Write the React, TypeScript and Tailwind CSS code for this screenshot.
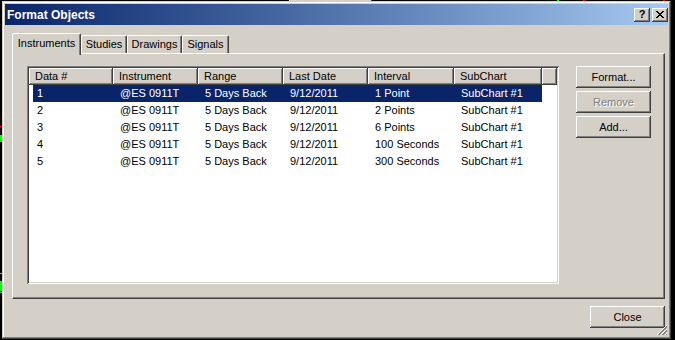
import React from "react"

const font = "font-['Liberation_Sans',Arial,sans-serif]"

const raised =
  "shadow-[inset_-1px_-1px_#404040,inset_1px_1px_#ffffff,inset_-2px_-2px_#808080,inset_2px_2px_#d4d0c8]"
const frame =
  "shadow-[inset_-1px_-1px_#404040,inset_1px_1px_#d4d0c8,inset_-2px_-2px_#808080,inset_2px_2px_#ffffff]"
const sunken =
  "shadow-[inset_1px_1px_#808080,inset_-1px_-1px_#ffffff,inset_2px_2px_#404040,inset_-2px_-2px_#d4d0c8]"

const columns = [
  { label: "Data #", w: 84 },
  { label: "Instrument", w: 85 },
  { label: "Range", w: 85 },
  { label: "Last Date", w: 85 },
  { label: "Interval", w: 86 },
  { label: "SubChart", w: 88 },
]

const rows = [
  ["1", "@ES 0911T", "5 Days Back", "9/12/2011", "1 Point", "SubChart #1"],
  ["2", "@ES 0911T", "5 Days Back", "9/12/2011", "2 Points", "SubChart #1"],
  ["3", "@ES 0911T", "5 Days Back", "9/12/2011", "6 Points", "SubChart #1"],
  ["4", "@ES 0911T", "5 Days Back", "9/12/2011", "100 Seconds", "SubChart #1"],
  ["5", "@ES 0911T", "5 Days Back", "9/12/2011", "300 Seconds", "SubChart #1"],
]

const tabs = [
  { label: "Instruments", w: 69, active: true },
  { label: "Studies", w: 46 },
  { label: "Drawings", w: 55 },
  { label: "Signals", w: 47 },
]

function Button({ label, disabled }: { label: string; disabled?: boolean }) {
  return (
    <div
      className={`w-[75px] h-[22px] flex items-center justify-center bg-[#d4d0c8] text-[11px] ${raised} ${
        disabled ? "text-[#808080] [text-shadow:1px_1px_0_#ffffff]" : "text-black"
      }`}
    >
      {label}
    </div>
  )
}

export default function App() {
  return (
    <div className={`w-[675px] h-[340px] bg-black relative overflow-hidden ${font}`}>
      {/* chart bits behind the dialog */}
      <div className="absolute left-[289px] top-0 w-[83px] h-[3px] bg-[#d4d0c8] border-l border-white border-r border-r-[#404040]" />
      <div className="absolute left-[557px] top-0 w-[2px] h-[3px] bg-[#00ff00]" />
      <div className="absolute left-[583px] top-0 w-[2px] h-[3px] bg-[#ff0000]" />
      <div className="absolute left-[663px] top-0 w-[2px] h-[3px] bg-[#ff0000]" />
      <div className="absolute left-0 top-[126px] w-[2px] h-[1px] bg-[#ff0000]" />
      <div className="absolute left-0 top-[135px] w-[2px] h-[7px] bg-[#00ff00]" />
      <div className="absolute left-0 top-[273px] w-[2px] h-[1px] bg-[#40c0c0]" />
      <div className="absolute left-0 top-[281px] w-[2px] h-[10px] bg-[#00ff00]" />
      <div className="absolute left-0 top-[292px] w-[2px] h-[1px] bg-[#40c0c0]" />

      {/* dialog window */}
      <div className={`relative ml-[2px] mt-[1px] w-[669px] h-[338px] bg-[#d4d0c8] p-[3px] flex flex-col ${frame}`}>
        {/* title bar */}
        <div className="h-[21px] flex items-center pl-[2px] pr-0 bg-gradient-to-r from-[#0a246a] to-[#a6caf0]">
          <span className="text-white text-[12px] font-bold flex-1">Format Objects</span>
          <div className={`w-[16px] h-[14px] bg-[#d4d0c8] flex items-center justify-center text-[11px] font-bold text-black leading-none ${raised}`}>
            ?
          </div>
          <div className={`ml-[2px] w-[16px] h-[14px] bg-[#d4d0c8] flex items-center justify-center ${raised}`}>
            <svg width="8" height="7" viewBox="0 0 8 7" shapeRendering="crispEdges">
              <path
                d="M0 0h2v1H0zM6 0h2v1H6zM1 1h2v1H1zM5 1h2v1H5zM2 2h4v1H2zM3 3h2v1H3zM2 4h4v1H2zM1 5h2v1H1zM5 5h2v1H5zM0 6h2v1H0zM6 6h2v1H6z"
                fill="#000"
              />
            </svg>
          </div>
        </div>

        {/* body */}
        <div className="flex-1 flex flex-col pl-[7px] pr-[3px] pt-[8px]">
          {/* tabs */}
          <div className="flex items-end h-[20px]">
            {tabs.map((t) =>
              t.active ? (
                <div
                  key={t.label}
                  style={{ width: t.w }}
                  className="relative z-10 h-[22px] -mb-[2px] bg-[#d4d0c8] border-l border-t border-white border-r border-r-[#404040] rounded-t-[2px] shadow-[inset_-1px_0_#808080] flex items-start justify-center pt-[1px] text-[11px] text-black"
                >
                  {t.label}
                </div>
              ) : (
                <div
                  key={t.label}
                  style={{ width: t.w }}
                  className="h-[18px] bg-[#d4d0c8] border-l border-t border-white border-r border-r-[#404040] rounded-t-[2px] shadow-[inset_-1px_0_#808080] flex items-center justify-center text-[11px] text-black"
                >
                  {t.label}
                </div>
              )
            )}
          </div>

          {/* panel */}
          <div className="w-[653px] h-[246px] bg-[#d4d0c8] border-l border-t border-white border-r border-b border-r-[#404040] border-b-[#404040] shadow-[inset_-1px_-1px_#808080] flex pl-[14px] pt-[12px]">
            {/* list view */}
            <div className={`w-[532px] h-[218px] bg-white p-[2px] flex flex-col ${sunken}`}>
              <div className="flex h-[17px] shrink-0">
                {columns.map((c) => (
                  <div
                    key={c.label}
                    style={{ width: c.w }}
                    className={`h-full bg-[#d4d0c8] flex items-center pl-[6px] text-[11px] text-black ${raised}`}
                  >
                    {c.label}
                  </div>
                ))}
                <div className={`flex-1 h-full bg-[#d4d0c8] ${raised}`} />
              </div>
              {rows.map((r, i) => (
                <div key={i} className="flex h-[17px] pl-[4px] text-[11px]">
                  <div className={`flex ${i === 0 ? "bg-[#0a246a] text-white" : "text-black"}`}>
                    {r.map((cell, j) => (
                      <div
                        key={j}
                        style={{ width: j === 0 ? 80 : columns[j].w }}
                        className={`flex items-center ${j === 0 ? "pl-[4px]" : "pl-[7px]"}`}
                      >
                        {cell}
                      </div>
                    ))}
                  </div>
                </div>
              ))}
            </div>

            {/* side buttons */}
            <div className="ml-[17px] flex flex-col gap-[3px]">
              <Button label="Format..." />
              <Button label="Remove" disabled />
              <Button label="Add..." />
            </div>
          </div>

          {/* bottom row */}
          <div className="flex justify-end pt-[7px] w-[653px]">
            <Button label="Close" />
          </div>
        </div>

        {/* size grip */}
        <svg className="absolute right-[3px] bottom-[3px]" width="12" height="12" viewBox="0 0 12 12" shapeRendering="crispEdges">
          <path d="M11 1L1 11M11 5L5 11M11 9L9 11" stroke="#ffffff" strokeWidth="1" />
          <path d="M11 2L2 11M11 3L3 11M11 6L6 11M11 7L7 11M11 10L10 11" stroke="#808080" strokeWidth="1" />
        </svg>
      </div>
    </div>
  )
}
